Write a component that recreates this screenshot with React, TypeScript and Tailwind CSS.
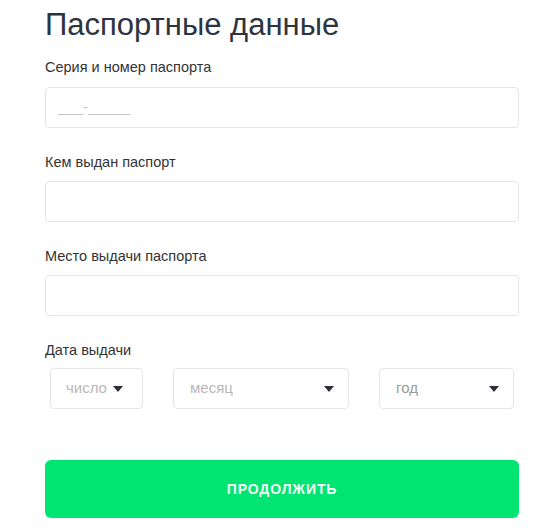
import React from "react";

function Caret() {
  return (
    <svg width="10" height="6" viewBox="0 0 10 6" className="shrink-0">
      <path d="M0 0 L10 0 L5 6 Z" fill="#2b2f38" />
    </svg>
  );
}

function Label({ children }: { children: React.ReactNode }) {
  return <div className="text-[14.5px] leading-[18px] text-[#333333]">{children}</div>;
}

function Input({ placeholder }: { placeholder?: string }) {
  return (
    <div className="h-[41px] w-full rounded-[4px] border border-[#e6e6e6] bg-white px-[12px] flex items-center text-[15px] text-[#c4c4c4]">
      {placeholder}
    </div>
  );
}

export default function App() {
  return (
    <div className="w-[539px] h-[532px] bg-white" style={{ fontFamily: '"Liberation Sans", Arial, sans-serif' }}>
      <div className="pl-[45px] pr-[20px] pt-[7px]">
        <h1 className="text-[31px] leading-[36px] text-[#2d3440] font-normal">Паспортные данные</h1>
        <div className="mt-[15px]">
          <Label>Серия и номер паспорта</Label>
          <div className="mt-[11px]">
            <Input placeholder="___-_____" />
          </div>
        </div>
        <div className="mt-[25px]">
          <Label>Кем выдан паспорт</Label>
          <div className="mt-[10px]">
            <Input />
          </div>
        </div>
        <div className="mt-[25px]">
          <Label>Место выдачи паспорта</Label>
          <div className="mt-[10px]">
            <Input />
          </div>
        </div>
        <div className="mt-[25px]">
          <Label>Дата выдачи</Label>
          <div className="mt-[9px] flex pl-[5px]">
            <div className="h-[41px] w-[93px] rounded-[4px] border border-[#e6e6e6] flex items-center pl-[15px] pr-[10px] gap-[6px] text-[15px] text-[#b8b8b8]">
              <span>число</span>
              <Caret />
            </div>
            <div className="ml-[30px] h-[41px] w-[176px] rounded-[4px] border border-[#e6e6e6] flex items-center justify-between pl-[16px] pr-[14px] text-[15px] text-[#b8b8b8]">
              <span>месяц</span>
              <Caret />
            </div>
            <div className="ml-[30px] h-[41px] w-[135px] rounded-[4px] border border-[#e6e6e6] flex items-center justify-between pl-[16px] pr-[14px] text-[15px] text-[#9a9a9a]">
              <span>год</span>
              <Caret />
            </div>
          </div>
        </div>
        <button className="mt-[51px] h-[58px] w-full rounded-[6px] bg-[#00e472] text-[#f4fff8] font-bold text-[14px] tracking-[0.9px]">
          ПРОДОЛЖИТЬ
        </button>
      </div>
    </div>
  );
}
